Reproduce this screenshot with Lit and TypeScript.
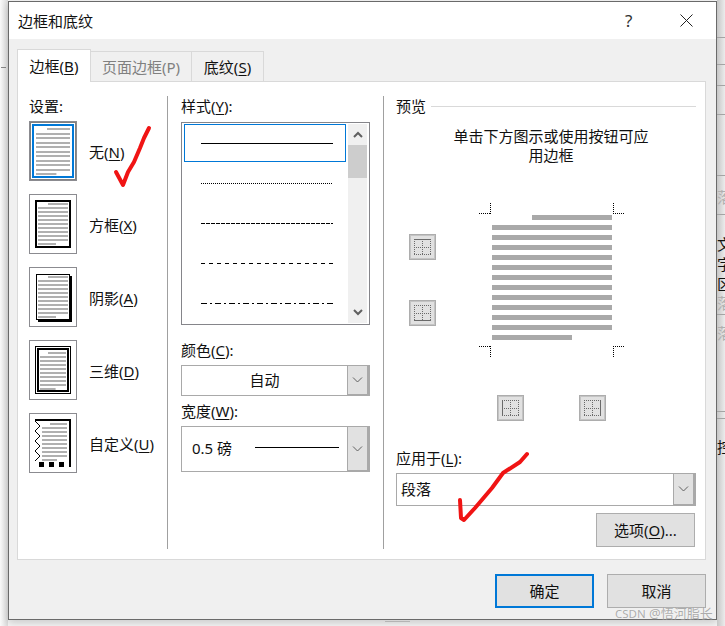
import { LitElement, css, html, svg } from 'lit';
import { customElement } from 'lit/decorators.js';

// ---- document thumbnails in the settings column ----
const greyLines = (x1: number, first: number, x2: number, y: number, step: number, n: number) => {
   const out = [];
   for (let i = 0; i < n; i++) {
      const x = i === 0 ? first : x1;
      const w = (i === n - 1 ? x1 + (x2 - x1) * 0.6 : x2) - x;
      out.push(svg`<rect x=${x} y=${Math.round(y + i * step)} width=${w} height="2" fill="#b0b0b0"></rect>`);
   }
   return out;
};

const thumbs = [
   {
      label: '无',
      key: 'N',
      art: svg`
         <rect x=".5" y=".5" width="45" height="57" fill="none" stroke="#000" stroke-dasharray="1 1"></rect>
         <rect x="3" y="3" width="40" height="52" fill="none" stroke="#0078d7" stroke-width="2"></rect>
         ${greyLines(6, 17, 40, 6, 4.5, 11)}`,
   },
   {
      label: '方框',
      key: 'X',
      art: svg`
         <rect x="6" y="6" width="34" height="46" fill="none" stroke="#000" stroke-width="2"></rect>
         ${greyLines(8, 18, 38, 8, 4, 11)}`,
   },
   {
      label: '阴影',
      key: 'A',
      art: svg`
         <rect x="6.5" y="6.5" width="33" height="45" fill="none" stroke="#000"></rect>
         <path d="M41 8v45H8" fill="none" stroke="#000" stroke-width="2"></path>
         ${greyLines(8, 18, 38, 8, 4, 11)}`,
   },
   {
      label: '三维',
      key: 'D',
      art: svg`
         <rect x="5.5" y="5.5" width="35" height="47" fill="none" stroke="#000"></rect>
         <rect x="8" y="8" width="30" height="42" fill="none" stroke="#000" stroke-width="2"></rect>
         ${greyLines(10, 18, 36, 11, 4, 10)}`,
   },
   {
      label: '自定义',
      key: 'U',
      art: svg`
         <path d="M5 6h36M40 6v42" fill="none" stroke="#000" stroke-width="2"></path>
         <path d="M5 7l5 5-5 5 5 5-5 5 5 5-5 5 5 5-5 5" fill="none" stroke="#000"></path>
         <rect x="9" y="48" width="5" height="5"></rect>
         <rect x="19" y="48" width="5" height="5"></rect>
         <rect x="29" y="48" width="5" height="5"></rect>
         <rect x="39" y="48" width="2" height="5"></rect>
         ${greyLines(12, 20, 37, 9, 4, 10)}`,
   },
];

const styleLines = [
   { dash: '' },
   { dash: '1 1' },
   { dash: '4 1' },
   { dash: '4 4' },
   { dash: '6 3 2 3' },
];

// what shows of the document behind the dialog, top to bottom
const behind = [
   { h: 38, line: 1 }, { h: 27, line: 1 }, { h: 21, line: 1 }, { h: 29, line: 1 }, { h: 61, line: 1 },
   { h: 12 }, { h: 18, text: '落', grey: 1 }, { h: 9, line: 1 }, { h: 19 },
   { h: 20, text: '文' }, { h: 20, text: '字' }, { h: 20, text: '区' },
   { h: 17, text: '落', grey: 1 }, { h: 4, line: 1 }, { h: 9 }, { h: 18, text: '落', grey: 1 },
   { h: 70, line: 1 }, { h: 7, line: 1 }, { h: 19 }, { h: 18, text: '控' },
];

const gridBtn = (edge: string) => html`
   <button class="tool">
      <svg width="17" height="16" viewBox="0 0 17 16">
         <path d="M0 .5h17M0 8.5h17M0 15.5h17M.5 0v16M8.5 0v16M16.5 0v16" fill="none" stroke="#6a6a6a" stroke-dasharray="1 1"></path>
         <path d=${edge} fill="none" stroke="#6a6a6a"></path>
      </svg>
   </button>`;

const chevron = html`<svg width="11" height="6" viewBox="0 0 11 6"><path d="M1 .5l4.5 4.5L10 .5" fill="none" stroke="#606060"></path></svg>`;
const scrollChevron = html`<svg width="10" height="7" viewBox="0 0 10 7"><path d="M1 1l4 4 4-4" fill="none" stroke="#606060" stroke-width="2"></path></svg>`;

const docLines = () => {
   const out = [];
   for (let i = 0; i < 13; i++) {
      const x = i === 0 ? 53 : 13;
      const w = i === 0 ? 80 : i === 12 ? 80 : 120;
      out.push(svg`<rect x=${x} y=${12 + i * 10} width=${w} height="5" fill="#a9a9a9"></rect>`);
   }
   return out;
};

@customElement('app-root')
export class AppRoot extends LitElement {
   static styles = css`
      :host {
         display: block;
         position: relative;
         width: 725px;
         height: 626px;
         overflow: hidden;
         background: #f6f6f6;
         color: #111;
         font: 15px/20px 'Noto Sans', 'Noto Sans CJK SC', sans-serif;
      }
      u {
         text-underline-offset: 2px;
      }
      button {
         font: inherit;
         color: inherit;
         padding: 0;
      }

      .page {
         display: flex;
         height: 626px;
      }
      .left-edge {
         width: 8px;
         background: linear-gradient(90deg, #fafafa, #dcdcdc);
         display: flex;
         flex-direction: column;
         padding-top: 67px;
         box-sizing: border-box;
      }
      .tick {
         width: 5px;
         height: 1px;
         margin-left: 1px;
         background: #888;
      }
      .right-edge {
         flex: 1;
         overflow: hidden;
         background: linear-gradient(90deg, #c6c6c6, #ececec);
      }
      .cell {
         box-sizing: border-box;
         white-space: nowrap;
         overflow: hidden;
         line-height: 16px;
         display: flex;
         align-items: center;
      }
      .cell.line {
         border-bottom: 1px solid #a4a4a4;
      }
      .cell.grey {
         color: #b0b0b0;
      }

      .dialog {
         box-sizing: border-box;
         width: 709px;
         height: 619px;
         margin-top: 1px;
         border: 1px solid #6a6a6a;
         background: #f0f0f0;
         box-shadow: 0 3px 8px rgba(0, 0, 0, 0.18);
      }
      .titlebar {
         height: 37px;
         background: #fff;
         display: flex;
         align-items: center;
         padding-left: 9px;
      }
      .titlebar .title {
         flex: 1;
      }
      .help {
         width: 55px;
         font-size: 17px;
         color: #333;
      }
      .close {
         width: 36px;
         display: flex;
      }
      .body {
         padding: 10px 10px 0 8px;
      }

      .tabs {
         display: flex;
         align-items: flex-end;
         height: 32px;
      }
      .tab {
         box-sizing: border-box;
         height: 30px;
         line-height: 30px;
         text-align: center;
         border: 1px solid #d9d9d9;
         border-left: 0;
         border-bottom: 0;
      }
      .tab.active {
         width: 74px;
         height: 33px;
         margin-bottom: -1px;
         line-height: 32px;
         background: #fff;
         border-left: 1px solid #d9d9d9;
         position: relative;
      }
      .tab.off {
         width: 101px;
         color: #808080;
      }
      .tab.last {
         width: 72px;
      }

      .panel {
         box-sizing: border-box;
         width: 689px;
         height: 479px;
         border: 1px solid #d9d9d9;
         background: #fff;
         padding: 14px 0 10px;
         display: grid;
         grid-template-columns: 149px 216px 1fr;
      }
      .col-set {
         padding-left: 11px;
      }
      .thumbs {
         margin-top: 5px;
         display: flex;
         flex-direction: column;
         gap: 13px;
      }
      .thumb-row {
         display: flex;
         align-items: center;
         gap: 12px;
      }
      .thumb-row .name {
         margin-top: 1px;
      }
      .thumb {
         width: 48px;
         height: 60px;
         box-sizing: border-box;
         border: 1px solid #8b8b90;
         display: block;
      }
      .thumb svg {
         display: block;
      }

      .col-style {
         border-left: 1px solid #a0a0a0;
         padding-left: 13px;
         display: flex;
         flex-direction: column;
      }
      .listbox {
         box-sizing: border-box;
         width: 189px;
         height: 203px;
         margin: 6px 0 15px;
         border: 1px solid #85858a;
         display: flex;
         padding: 0 2px 0 2px;
      }
      .rows {
         width: 162px;
         padding-top: 1px;
         overflow: hidden;
      }
      .row {
         box-sizing: border-box;
         height: 38px;
         margin-bottom: 2px;
         border: 1px solid transparent;
         padding-left: 16px;
         display: flex;
         align-items: center;
      }
      .row.selected {
         border-color: #0078d7;
      }
      .row svg {
         display: block;
      }
      .scroll {
         width: 19px;
         margin: 1px 0 1px 2px;
         background: #f0f0f0;
         display: flex;
         flex-direction: column;
         align-items: center;
      }
      .arrow {
         height: 21px;
         display: flex;
         align-items: center;
      }
      .arrow.up svg {
         transform: scaleY(-1);
      }
      .thumb-bar {
         width: 19px;
         height: 33px;
         background: #cdcdcd;
      }
      .scroll .gap {
         flex: 1;
      }

      .combo {
         box-sizing: border-box;
         display: flex;
         border: 1px solid #a9a9a9;
         background: #fff;
      }
      .combo .value {
         flex: 1;
         display: flex;
         align-items: center;
      }
      .combo .drop {
         width: 22px;
         box-sizing: border-box;
         border-left: 1px solid #a9a9a9;
         border-right: 2px solid #a9a9a9;
         border-bottom: 1px solid #a9a9a9;
         background: #e1e1e1;
         display: flex;
         align-items: center;
         justify-content: center;
      }
      .combo.color {
         width: 189px;
         height: 31px;
         margin: 5px 0 5px;
      }
      .combo.color .value {
         justify-content: center;
         padding-bottom: 2px;
      }
      .combo.weight {
         width: 189px;
         height: 46px;
         margin-top: 5px;
      }
      .combo.weight .value {
         padding: 0 0 3px 10px;
         gap: 23px;
      }
      .combo.weight .rule {
         width: 84px;
         height: 1px;
         background: #000;
      }

      .col-preview {
         border-left: 1px solid #a0a0a0;
         padding-left: 12px;
         width: 300px;
         box-sizing: content-box;
         display: flex;
         flex-direction: column;
      }
      .heading {
         display: flex;
         align-items: center;
         gap: 5px;
      }
      .heading i {
         flex: 1;
         height: 1px;
         background: #d9d9d9;
      }
      .hint {
         width: 204px;
         margin: 11px 0 38px 53px;
         text-align: center;
         line-height: 19px;
      }
      .canvas {
         display: flex;
         height: 156px;
      }
      .side {
         margin: 31px 43px 0 13px;
         display: flex;
         flex-direction: column;
         gap: 40px;
      }
      .canvas svg.doc {
         display: block;
      }
      .under {
         display: flex;
         gap: 55px;
         margin: 36px 0 27px 101px;
      }
      .tool {
         box-sizing: border-box;
         width: 27px;
         height: 26px;
         border: 1px solid #adadad;
         outline: 1px solid #c4c4c4;
         outline-offset: -2px;
         background: #e1e1e1;
         display: flex;
         align-items: center;
         justify-content: center;
      }
      .tool svg {
         display: block;
      }
      .combo.apply {
         width: 300px;
         height: 33px;
         margin-top: 5px;
      }
      .combo.apply .value {
         padding: 0 0 2px 4px;
      }
      .btn {
         box-sizing: border-box;
         width: 99px;
         height: 34px;
         border: 1px solid #adadad;
         background: #e1e1e1;
      }
      .options {
         margin: 7px 0 0 200px;
      }
      .btn.primary {
         border: 2px solid #0078d7;
      }
      .actions {
         display: flex;
         justify-content: flex-end;
         gap: 13px;
         margin-top: 14px;
      }

      .ink {
         position: absolute;
         left: 0;
         top: 0;
         pointer-events: none;
      }
      .mark {
         position: absolute;
         left: 615px;
         top: 603px;
         white-space: nowrap;
         color: rgba(120, 120, 120, 0.6);
         font-size: 13px;
         text-shadow: 0 0 1px rgba(255, 255, 255, 0.6);
      }
      .mark small {
         font-size: 11.5px;
      }
   `;

   render() {
      return html`
         <div class="page">
            <div class="left-edge"><div class="tick"></div></div>
            <div class="dialog">
               <div class="titlebar">
                  <span class="title">边框和底纹</span>
                  <span class="help">?</span>
                  <span class="close">
                     <svg width="13" height="13" viewBox="0 0 13 13"><path d="M.5 .5l12 12M12.5 .5l-12 12" stroke="#222" fill="none"></path></svg>
                  </span>
               </div>
               <div class="body">
                  <div class="tabs">
                     <div class="tab active">边框(<u>B</u>)</div>
                     <div class="tab off">页面边框(P)</div>
                     <div class="tab last">底纹(<u>S</u>)</div>
                  </div>
                  <div class="panel">
                     <div class="col-set">
                        <div>设置:</div>
                        <div class="thumbs">
                           ${thumbs.map(
                              (t) => html`<div class="thumb-row">
                                 <span class="thumb"><svg width="46" height="58" viewBox="0 0 46 58">${t.art}</svg></span>
                                 <span class="name">${t.label}(<u>${t.key}</u>)</span>
                              </div>`
                           )}
                        </div>
                     </div>

                     <div class="col-style">
                        <div>样式(<u>Y</u>):</div>
                        <div class="listbox">
                           <div class="rows">
                              ${styleLines.map(
                                 (l, i) => html`<div class="row ${i === 0 ? 'selected' : ''}">
                                    <svg width="132" height="1" viewBox="0 0 132 1">
                                       <line x1="0" y1=".5" x2="132" y2=".5" stroke="#000" stroke-dasharray=${l.dash}></line>
                                    </svg>
                                 </div>`
                              )}
                           </div>
                           <div class="scroll">
                              <div class="arrow up">${scrollChevron}</div>
                              <div class="thumb-bar"></div>
                              <div class="gap"></div>
                              <div class="arrow down">${scrollChevron}</div>
                           </div>
                        </div>
                        <div>颜色(<u>C</u>):</div>
                        <div class="combo color">
                           <div class="value">自动</div>
                           <div class="drop">${chevron}</div>
                        </div>
                        <div>宽度(<u>W</u>):</div>
                        <div class="combo weight">
                           <div class="value"><span>0.5 磅</span><span class="rule"></span></div>
                           <div class="drop">${chevron}</div>
                        </div>
                     </div>

                     <div class="col-preview">
                        <div class="heading">预览<i></i></div>
                        <div class="hint">单击下方图示或使用按钮可应用边框</div>
                        <div class="canvas">
                           <div class="side">
                              ${gridBtn('M0 .5h17')}
                              ${gridBtn('M0 15.5h17')}
                           </div>
                           <svg class="doc" width="146" height="156" viewBox="0 0 146 156">
                              <path
                                 d="M0 10.5h12M11.5 0v11M134 10.5h12M134.5 0v11M0 143.5h12M11.5 143v12M134 143.5h12M134.5 143v12"
                                 fill="none"
                                 stroke="#000"
                                 stroke-dasharray="1 1"
                              ></path>
                              ${docLines()}
                           </svg>
                        </div>
                        <div class="under">
                           ${gridBtn('M.5 0v16')}
                           ${gridBtn('M16.5 0v16')}
                        </div>
                        <div>应用于(<u>L</u>):</div>
                        <div class="combo apply">
                           <div class="value">段落</div>
                           <div class="drop">${chevron}</div>
                        </div>
                        <button class="btn options">选项(<u>O</u>)...</button>
                     </div>
                  </div>
                  <div class="actions">
                     <button class="btn primary">确定</button>
                     <button class="btn">取消</button>
                  </div>
               </div>
            </div>
            <div class="right-edge">
               ${behind.map(
                  (c) => html`<div
                     class="cell ${c.line ? 'line' : ''} ${c.grey ? 'grey' : ''}"
                     style="height:${c.h}px"
                  >${c.text ?? ''}</div>`
               )}
            </div>
         </div>

         <svg class="ink" width="725" height="626" viewBox="0 0 725 626">
            <path d="M385 621.5h25" stroke="#b4b4b4" fill="none"></path>
            <path
               d="M116 172l7 13 5-13 6-10 6-14 4-10 5-10"
               fill="none"
               stroke="#f01414"
               stroke-width="4"
               stroke-linecap="round"
               stroke-linejoin="round"
            ></path>
            <path
               d="M460 500l1 18 3 2 11-12 17-20 11-15 17-11 7-8"
               fill="none"
               stroke="#f01414"
               stroke-width="4"
               stroke-linecap="round"
               stroke-linejoin="round"
            ></path>
         </svg>
         <div class="mark"><small>CSDN</small> @悟河脂长</div>
      `;
   }
}
